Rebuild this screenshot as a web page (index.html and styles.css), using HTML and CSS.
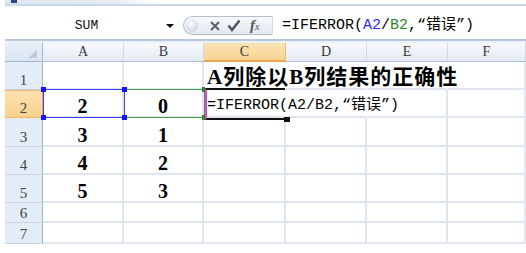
FILE: index.html
```html
<!DOCTYPE html>
<html lang="zh-CN">
<head>
    <meta charset="UTF-8">
    <title>IFERROR</title>
    <link rel="stylesheet" href="styles.css">
</head>
<body>
    <div class="app">
        <div class="ribbon-edge"><span class="qa-icon"></span></div>
        <div class="formula-bar">
            <div class="name-box">
                <span class="name">SUM</span>
                <span class="drop"></span>
            </div>
            <div class="fx-pill">
                <span class="knob"></span>
                <svg class="btn" width="12" height="12" viewBox="0 0 12 12">
                    <path d="M2 2 L10 10 M10 2 L2 10" stroke="#5a5f68" stroke-width="2" fill="none"/>
                </svg>
                <svg class="btn" width="14" height="13" viewBox="0 0 14 13">
                    <path d="M1.5 6.5 L5 11 L12.5 1.5" stroke="#4f545c" stroke-width="2.4" fill="none"/>
                </svg>
                <span class="fx"><i>f</i><span class="fx-x">x</span></span>
            </div>
            <div class="formula-input">=IFERROR(<span class="ref-a">A2</span>/<span class="ref-b">B2</span>,“错误”)</div>
        </div>

        <div class="sheet">
            <div class="corner"><span class="tri"></span></div>
            <div class="col-head">A</div>
            <div class="col-head">B</div>
            <div class="col-head active">C</div>
            <div class="col-head">D</div>
            <div class="col-head">E</div>
            <div class="col-head">F</div>

            <div class="row-head">1</div>
            <div class="cell"></div>
            <div class="cell"></div>
            <div class="cell spill title">A列除以B列结果的正确性</div>
            <div class="cell spill"></div>
            <div class="cell spill"></div>
            <div class="cell"></div>

            <div class="row-head active">2</div>
            <div class="cell num">2</div>
            <div class="cell num">0</div>
            <div class="cell spill edit">=IFERROR(A2/B2,“错误”)</div>
            <div class="cell spill"></div>
            <div class="cell"></div>
            <div class="cell"></div>

            <div class="row-head">3</div>
            <div class="cell num">3</div>
            <div class="cell num">1</div>
            <div class="cell"></div>
            <div class="cell"></div>
            <div class="cell"></div>
            <div class="cell"></div>

            <div class="row-head">4</div>
            <div class="cell num">4</div>
            <div class="cell num">2</div>
            <div class="cell"></div>
            <div class="cell"></div>
            <div class="cell"></div>
            <div class="cell"></div>

            <div class="row-head">5</div>
            <div class="cell num">5</div>
            <div class="cell num">3</div>
            <div class="cell"></div>
            <div class="cell"></div>
            <div class="cell"></div>
            <div class="cell"></div>

            <div class="row-head">6</div>
            <div class="cell"></div>
            <div class="cell"></div>
            <div class="cell"></div>
            <div class="cell"></div>
            <div class="cell"></div>
            <div class="cell"></div>

            <div class="row-head">7</div>
            <div class="cell"></div>
            <div class="cell"></div>
            <div class="cell"></div>
            <div class="cell"></div>
            <div class="cell"></div>
            <div class="cell"></div>

            <!-- range highlights and the active cell lie over the grid -->
            <div class="range range-a">
                <span class="handle tl"></span><span class="handle tr"></span>
                <span class="handle bl"></span><span class="handle br"></span>
            </div>
            <div class="range range-b">
                <span class="handle tr"></span><span class="handle br"></span>
            </div>
            <div class="active-cell"><span class="fill-handle"></span></div>
        </div>
    </div>
</body>
</html>
```

FILE: styles.css
```css
body {
    margin: 0;
    background: #fff;
    font-family: "Liberation Serif", "Noto Sans CJK SC", serif;
    color: #000;
}
.app {
    padding-left: 5px;
}
.ribbon-edge {
    height: 4px;
    display: flex;
    background: linear-gradient(to right, #dfe6f0 0, #e6ebf3 110px, #fff 150px);
    border-bottom: 2px solid #c9d8eb;
}
.qa-icon {
    width: 6px;
    height: 3px;
    margin-left: 6px;
    background: #2b4787;
}

/* formula bar */
.formula-bar {
    display: flex;
    align-items: flex-end;
    border-bottom: 2px solid #b7c8de;
    box-sizing: border-box;
    height: 35px;
    padding-bottom: 4px;
}
.name-box {
    width: 175px;
    height: 19px;
    display: flex;
    align-items: center;
}
.name {
    flex: 1;
    text-align: center;
    font-family: "Liberation Mono", monospace;
    font-size: 13px;
    color: #111;
    padding-left: 2px;
}
.drop {
    width: 0;
    height: 0;
    border-left: 4px solid transparent;
    border-right: 4px solid transparent;
    border-top: 4px solid #111;
    margin-right: 6px;
}
.fx-pill {
    width: 89px;
    height: 19px;
    margin-left: 3px;
    box-sizing: border-box;
    display: flex;
    align-items: center;
    border: 1px solid #b3c0d2;
    border-right: none;
    border-radius: 10px 0 0 10px;
    background: linear-gradient(#f7f9fc, #e2e8f1);
}
.knob {
    width: 12px;
    height: 12px;
    margin-left: 2px;
    border-radius: 50%;
    background: radial-gradient(circle at 40% 35%, #ffffff 0, #dfe5ee 45%, #b9c4d3 100%);
}
.btn {
    margin-left: 11px;
}
.btn + .btn {
    margin-left: 6px;
}
.fx {
    margin-left: 9px;
    font-family: "Liberation Serif", serif;
    font-size: 15px;
    color: #555;
    line-height: 15px;
}
.fx i {
    font-weight: bold;
}
.fx-x {
    font-size: 10px;
    font-style: italic;
}
.formula-input {
    flex: 1;
    height: 19px;
    padding-left: 9px;
    border-left: 1px solid #d5dce6;
    font-family: "Liberation Mono", "Noto Sans CJK SC", monospace;
    font-size: 15px;
    line-height: 19px;
    white-space: nowrap;
}
.ref-a {
    color: #2a2aff;
}
.ref-b {
    color: #1f8a1f;
}

/* sheet */
.sheet {
    position: relative;
    display: grid;
    grid-template-columns: 38px 81px 80px 82px 81px 81px 1fr;
    grid-template-rows: 19px 28px 28px 29px 28px 28px 20px 21px;
    border-top: 2px solid #edf0f5;
}
.sheet > div {
    box-sizing: border-box;
}
.corner {
    position: relative;
    background: linear-gradient(#e9eff8, #dbe4f1);
    border-right: 1px solid #9eb6ce;
    border-bottom: 1px solid #9eb6ce;
}
.tri {
    position: absolute;
    right: 5px;
    bottom: 3px;
    width: 0;
    height: 0;
    border-left: 9px solid transparent;
    border-bottom: 8px solid #c0cad7;
}
.col-head {
    background: linear-gradient(#f7f9fc, #e4eaf3);
    border-right: 1px solid #d0d9e5;
    border-bottom: 1px solid #a9bdd4;
    text-align: center;
    font-size: 14px;
    line-height: 18px;
    color: #3a3a3a;
}
.col-head.active {
    background: linear-gradient(#fbe3b5, #f8d493);
    border-right: 1px solid #f0b865;
    border-bottom: 2px solid #f2a647;
}
.row-head {
    display: flex;
    align-items: flex-end;
    justify-content: center;
    background: #e4ecf7;
    border-right: 1px solid #9eb6ce;
    border-bottom: 1px solid #c6d4e6;
    font-size: 15px;
    line-height: 16px;
    padding-bottom: 1px;
    color: #444;
}
.row-head.active {
    background: linear-gradient(#fde2b0, #fad28d);
    border-top: 1px solid #f2b266;
    border-bottom: 1px solid #f2b266;
    border-right: 1px solid #f2a647;
}
.cell {
    display: flex;
    align-items: flex-end;
    border-right: 2px solid #e0e6ef;
    border-bottom: 2px solid #e0e6ef;
    white-space: nowrap;
}
.cell.spill {
    border-right-color: transparent;
}
.num {
    justify-content: center;
    font-weight: bold;
    font-size: 20px;
    line-height: 19px;
}
.title {
    font-weight: bold;
    font-size: 21px;
    letter-spacing: 1px;
    line-height: 22px;
    padding-left: 3px;
}
.edit {
    font-family: "Liberation Mono", "Noto Sans CJK SC", monospace;
    font-size: 15px;
    line-height: 19px;
    padding-left: 3px;
    padding-bottom: 1px;
}

/* overlays */
.range {
    position: absolute;
    top: 46px;
    height: 29px;
    box-sizing: border-box;
}
.range-a {
    left: 38px;
    width: 82px;
    border: 1px solid #3b3bff;
    z-index: 2;
}
.range-b {
    left: 119px;
    width: 81px;
    border: 1px solid #46a046;
    border-left: none;
    z-index: 1;
}
.handle {
    position: absolute;
    width: 5px;
    height: 5px;
    background: #1414ff;
}
.range-b .handle {
    background: #228b22;
    width: 3px;
}
.handle.tl { left: -3px; top: -3px; }
.handle.tr { right: -3px; top: -3px; }
.handle.bl { left: -3px; bottom: -3px; }
.handle.br { right: -3px; bottom: -3px; }
.range-b .handle.tr, .range-b .handle.br { right: -1px; }
.active-cell {
    position: absolute;
    left: 200px;
    top: 45px;
    width: 80px;
    height: 32px;
    box-sizing: border-box;
    border-top: 2px solid #111;
    border-bottom: 2px solid #111;
    border-left: 2px solid #e040d8;
    z-index: 3;
}
.fill-handle {
    position: absolute;
    right: -5px;
    bottom: -4px;
    width: 6px;
    height: 5px;
    background: #111;
}
```
